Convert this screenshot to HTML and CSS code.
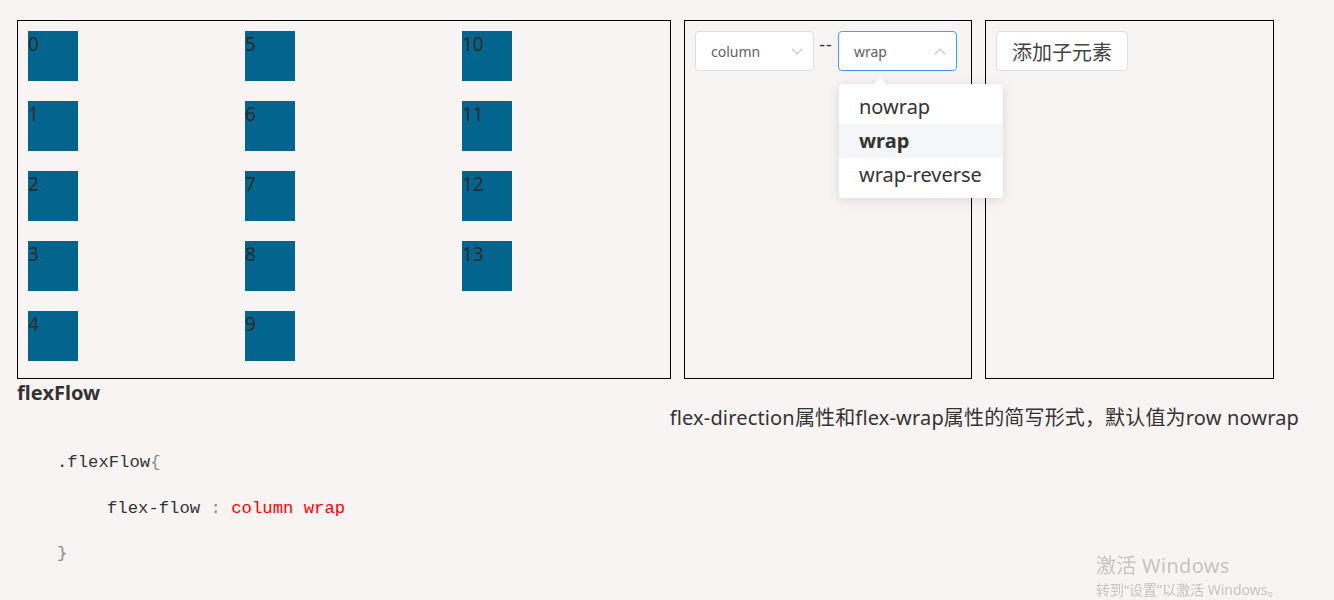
FILE: index.html
```html
<!DOCTYPE html>
<html lang="zh">
<head>
<meta charset="utf-8">
<link rel="stylesheet" href="styles.css">
</head>
<body>
<div class="page">
  <div class="row">
    <div class="box flow-box">
      <div class="item">0</div>
      <div class="item">1</div>
      <div class="item">2</div>
      <div class="item">3</div>
      <div class="item">4</div>
      <div class="item">5</div>
      <div class="item">6</div>
      <div class="item">7</div>
      <div class="item">8</div>
      <div class="item">9</div>
      <div class="item">10</div>
      <div class="item">11</div>
      <div class="item">12</div>
      <div class="item">13</div>
    </div>
    <div class="box ctrl-box">
      <div class="selects">
        <div class="select">
          <span class="select-text">column</span>
          <svg class="chev" width="12" height="7" viewBox="0 0 12 7"><path d="M1 1 L6 6 L11 1" fill="none" stroke="#c0c4cc" stroke-width="1.2"/></svg>
        </div>
        <span class="dash">--</span>
        <div class="select-wrap">
          <div class="select focused">
            <span class="select-text">wrap</span>
            <svg class="chev" width="12" height="7" viewBox="0 0 12 7"><path d="M1 6 L6 1 L11 6" fill="none" stroke="#c0c4cc" stroke-width="1.2"/></svg>
          </div>
          <div class="dropdown">
            <div class="arrow"></div>
            <div class="opt">nowrap</div>
            <div class="opt active">wrap</div>
            <div class="opt">wrap-reverse</div>
          </div>
        </div>
      </div>
    </div>
    <div class="box btn-box">
      <button class="btn">添加子元素</button>
    </div>
  </div>
  <h3 class="title">flexFlow</h3>
  <p class="desc">flex-direction属性和flex-wrap属性的简写形式，默认值为row nowrap</p>
  <div class="code">
    <div class="line">.flexFlow<span class="brace">{</span></div>
    <div class="line indent">flex-flow <span class="brace">:</span> <span class="val">column wrap</span></div>
    <div class="line"><span class="brace">}</span></div>
  </div>
</div>
<div class="watermark">
  <div class="wm1">激活 Windows</div>
  <div class="wm2">转到“设置”以激活 Windows。</div>
</div>
</body>
</html>
```
FILE: styles.css
```css
html, body {
  margin: 0;
  padding: 0;
  background: #f8f4f3;
}
body {
  font-family: "Noto Sans", "Noto Sans CJK SC", sans-serif;
  color: #303133;
}
.page {
  padding: 20px 0 0 17px;
}
.row {
  display: flex;
  gap: 13px;
  align-items: flex-start;
}
.box {
  border: 1px solid #000;
  height: 357px;
  box-sizing: content-box;
}
.flow-box {
  width: 651px;
  padding-right: 1px;
  display: flex;
  flex-flow: column wrap;
}
.item {
  width: 50px;
  height: 50px;
  margin: 10px;
  background: #03658e;
  color: #2b2b2b;
  font-size: 19px;
  line-height: 26px;
}
.ctrl-box {
  width: 266px;
  padding: 0 10px;
}
.btn-box {
  width: 267px;
  padding: 0 10px;
}
.selects {
  display: flex;
  align-items: flex-start;
  margin-top: 10px;
}
.select {
  width: 119px;
  height: 40px;
  box-sizing: border-box;
  border: 1px solid #dcdfe6;
  border-radius: 4px;
  background: #fff;
  display: flex;
  align-items: center;
  justify-content: space-between;
  padding: 0 10px 0 15px;
  font-size: 14px;
  color: #606266;
}
.select.focused {
  border-color: #409eff;
}
.chev {
  display: block;
}
.dash {
  width: 24px;
  text-align: center;
  font-size: 18px;
  line-height: 26px;
  color: #333;
  letter-spacing: 1px;
}
.select-wrap {
  position: relative;
}
.dropdown {
  position: absolute;
  left: 1px;
  top: 53px;
  width: 164px;
  box-sizing: border-box;
  background: #fff;
  border-radius: 4px;
  box-shadow: 0 2px 12px rgba(0,0,0,0.12);
  padding: 6px 0;
}
.arrow {
  position: absolute;
  top: -6px;
  left: 35px;
  width: 0;
  height: 0;
  border-left: 6px solid transparent;
  border-right: 6px solid transparent;
  border-bottom: 6px solid #fff;
}
.opt {
  height: 34px;
  line-height: 34px;
  padding: 0 20px;
  font-size: 20px;
  color: #333;
}
.opt.active {
  background: #f5f6f8;
  font-weight: bold;
}
.btn {
  margin-top: 10px;
  width: 132px;
  height: 40px;
  border: 1px solid #dcdfe6;
  border-radius: 4px;
  background: #fff;
  font-family: "Noto Sans CJK SC", sans-serif;
  font-size: 20px;
  color: #444;
  padding: 0;
}
.title {
  margin: 0;
  font-size: 20px;
  font-weight: bold;
  line-height: 28px;
  color: #333;
}
.desc {
  margin: -2px 0 0 0;
  font-size: 20px;
  line-height: 26px;
  color: #333;
  text-align: right;
  padding-right: 35px;
  letter-spacing: 0.16px;
}
.code {
  margin-top: 21px;
  padding-left: 40px;
  font-family: "Liberation Mono", monospace;
  font-size: 17.25px;
  color: #333;
}
.line {
  height: 45.5px;
  line-height: 22px;
}
.indent {
  padding-left: 50px;
}
.brace {
  color: #888;
}
.val {
  color: #f00;
}
.watermark {
  position: fixed;
  left: 1096px;
  top: 553px;
  color: #c4c4c4;
  font-family: "Noto Sans", "Noto Sans CJK SC", sans-serif;
}
.wm1 {
  font-size: 20px;
  line-height: 26px;
  letter-spacing: 0.3px;
}
.wm2 {
  font-size: 14px;
  line-height: 22px;
}
```
